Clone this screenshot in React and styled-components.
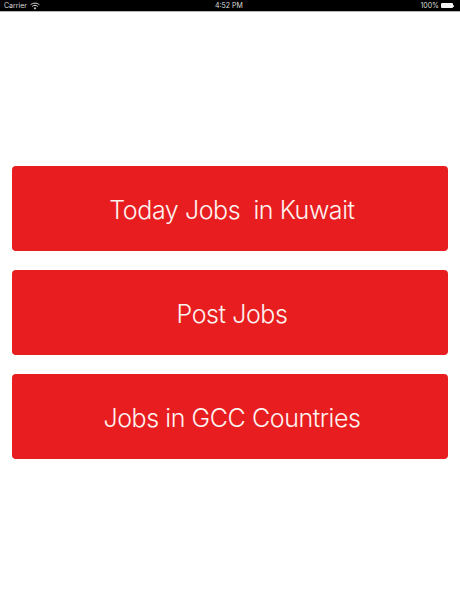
import React from 'react';
import styled, { createGlobalStyle } from 'styled-components';

const GlobalStyle = createGlobalStyle`
  html, body {
    margin: 0;
    padding: 0;
    background: #fff;
  }
`;

const Screen = styled.div`
  width: 460px;
  height: 614px;
  overflow: hidden;
  display: flex;
  flex-direction: column;
  font-family: Inter, "Liberation Sans", sans-serif;
`;

const StatusBar = styled.div`
  height: 11px;
  background: #000;
  color: #dcdcdc;
  font-size: 7px;
  display: grid;
  grid-template-columns: 1fr auto 1fr;
  align-items: center;
  padding: 0 6px 0 4px;
  border-bottom: 1px solid #b5b5b5;
  box-sizing: content-box;
`;

const StatusLeft = styled.div`
  display: flex;
  align-items: center;
  gap: 3px;
`;

const StatusRight = styled.div`
  display: flex;
  align-items: center;
  justify-content: flex-end;
  gap: 2px;
`;

const Battery = styled.div`
  width: 12px;
  height: 5px;
  background: #f2f2f2;
  border-radius: 1px;
`;

const BatteryCap = styled.div`
  width: 1px;
  height: 2px;
  margin-left: -2px;
  background: #bdbdbd;
`;

const Actions = styled.div`
  display: flex;
  flex-direction: column;
  gap: 19px;
  padding: 154px 12px 0;
`;

const ActionButton = styled.button`
  height: 85px;
  border: none;
  border-radius: 4px;
  background: #e81d20;
  color: #fdf3f0;
  font-family: inherit;
  font-size: 25px;
  font-weight: 350;
  letter-spacing: -0.42px;
  white-space: pre;
  padding: 2px 0 0 4px;
`;

const WifiIcon = () => (
  <svg width="10" height="8" viewBox="0 0 10 8" fill="none" stroke="#dcdcdc">
    <path d="M0.6 2.8C3 0.6 7 0.6 9.4 2.8" strokeWidth="1" />
    <path d="M2.2 4.4C3.8 3 6.2 3 7.8 4.4" strokeWidth="1" />
    <path d="M5 7.6 3.6 5.9C4.4 5.3 5.6 5.3 6.4 5.9Z" fill="#dcdcdc" stroke="none" />
  </svg>
);

const items = ['Today Jobs  in Kuwait', 'Post Jobs', 'Jobs in GCC Countries'];

const App = () => (
  <>
    <GlobalStyle />
    <Screen>
      <StatusBar>
        <StatusLeft>
          <span>Carrier</span>
          <WifiIcon />
        </StatusLeft>
        <span>4:52 PM</span>
        <StatusRight>
          <span>100%</span>
          <Battery />
          <BatteryCap />
        </StatusRight>
      </StatusBar>
      <Actions>
        {items.map((label) => (
          <ActionButton key={label}>{label}</ActionButton>
        ))}
      </Actions>
    </Screen>
  </>
);

export default App;
